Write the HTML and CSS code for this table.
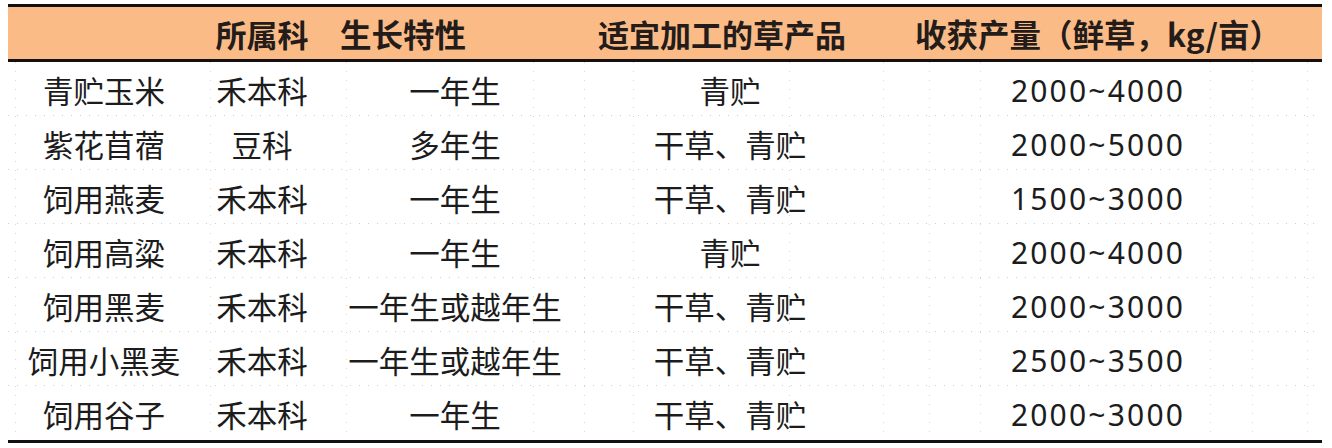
FILE: index.html
```html
<!DOCTYPE html>
<html lang="zh">
<head>
<meta charset="utf-8">
<link rel="stylesheet" href="styles.css">
</head>
<body>
<div class="sheet">
  <div class="row head">
    <div class="c c1"></div>
    <div class="c c2">所属科</div>
    <div class="c c3 left">生长特性</div>
    <div class="c c4 shift">适宜加工的草产品</div>
    <div class="c c5">收获产量（鲜草，kg/亩）</div>
  </div>
  <div class="body">
    <div class="row"><div class="c c1">青贮玉米</div><div class="c c2">禾本科</div><div class="c c3">一年生</div><div class="c c4">青贮</div><div class="c c5 num">2000~4000</div></div>
    <div class="row"><div class="c c1">紫花苜蓿</div><div class="c c2">豆科</div><div class="c c3">多年生</div><div class="c c4">干草、青贮</div><div class="c c5 num">2000~5000</div></div>
    <div class="row"><div class="c c1">饲用燕麦</div><div class="c c2">禾本科</div><div class="c c3">一年生</div><div class="c c4">干草、青贮</div><div class="c c5 num">1500~3000</div></div>
    <div class="row"><div class="c c1">饲用高粱</div><div class="c c2">禾本科</div><div class="c c3">一年生</div><div class="c c4">青贮</div><div class="c c5 num">2000~4000</div></div>
    <div class="row"><div class="c c1">饲用黑麦</div><div class="c c2">禾本科</div><div class="c c3">一年生或越年生</div><div class="c c4">干草、青贮</div><div class="c c5 num">2000~3000</div></div>
    <div class="row"><div class="c c1">饲用小黑麦</div><div class="c c2">禾本科</div><div class="c c3">一年生或越年生</div><div class="c c4">干草、青贮</div><div class="c c5 num">2500~3500</div></div>
    <div class="row last"><div class="c c1">饲用谷子</div><div class="c c2">禾本科</div><div class="c c3">一年生</div><div class="c c4">干草、青贮</div><div class="c c5 num">2000~3000</div></div>
  </div>
</div>
</body>
</html>
```
FILE: styles.css
```css
html, body {
  margin: 0;
  padding: 0;
  background: #ffffff;
}
body {
  width: 1332px;
  height: 448px;
  overflow: hidden;
  font-family: "Noto Sans CJK SC", "Noto Sans", sans-serif;
  color: #1c1c1c;
}
.sheet {
  margin: 4px 0 0 8px;
  width: 1314px;
}
.row {
  display: grid;
  grid-template-columns: 192px 124px 262px 288px 448px;
  height: 54px;
  align-items: center;
}
.head {
  height: 52px;
  background: #fabb87;
  border-top: 3px solid #141010;
  border-bottom: 3px solid #141010;
  font-weight: 700;
  color: #231c1a;
}
.c {
  text-align: center;
  white-space: nowrap;
  font-size: 30.5px;
  line-height: 1;
}
.head .c {
  font-size: 31.5px;
  padding-top: 1px;
}
.head .c2 { font-size: 31px; }
.head .shift {
  font-size: 31px;
  padding-right: 16px;
}
.left {
  text-align: left;
  padding-left: 16px;
}
.num {
  letter-spacing: 2.2px;
  font-family: "Noto Sans", "Open Sans", sans-serif;
  font-size: 30px;
}
.body {
  border-bottom: 3px solid #141010;
  background-image:
    linear-gradient(to bottom, #d6d6d6 1px, transparent 1px),
    linear-gradient(to bottom, #d6d6d6 1px, transparent 1px),
    linear-gradient(to bottom, #d6d6d6 1px, transparent 1px),
    linear-gradient(to bottom, #d6d6d6 1px, transparent 1px),
    linear-gradient(to bottom, #d6d6d6 1px, transparent 1px),
    linear-gradient(to bottom, #d6d6d6 1px, transparent 1px),
    linear-gradient(to bottom, #d6d6d6 1px, transparent 1px),
    linear-gradient(to bottom, #d6d6d6 1px, transparent 1px),
    linear-gradient(to bottom, #d6d6d6 1px, transparent 1px),
    linear-gradient(to bottom, #d6d6d6 1px, transparent 1px),
    linear-gradient(to bottom, #d6d6d6 1px, transparent 1px),
    linear-gradient(to bottom, #d6d6d6 1px, transparent 1px),
    linear-gradient(to bottom, #d6d6d6 1px, transparent 1px);
  background-size: 1px 9px;
  background-repeat: repeat-y;
  background-position: 7px 0, 202px 0, 338px 0, 525px 0, 576px 0, 625px 0, 781px 0, 875px 0, 921px 0, 972px 0, 1202px 0, 1244px 0, 1299px 0;
}
.body .row {
  background-image: linear-gradient(to right, #cfcfcf 1px, transparent 1px);
  background-size: 9px 1px;
  background-repeat: repeat-x;
  background-position: 0 100%;
}
.body .row.last {
  background-image: none;
}
.body .c {
  padding-top: 3px;
}
```
